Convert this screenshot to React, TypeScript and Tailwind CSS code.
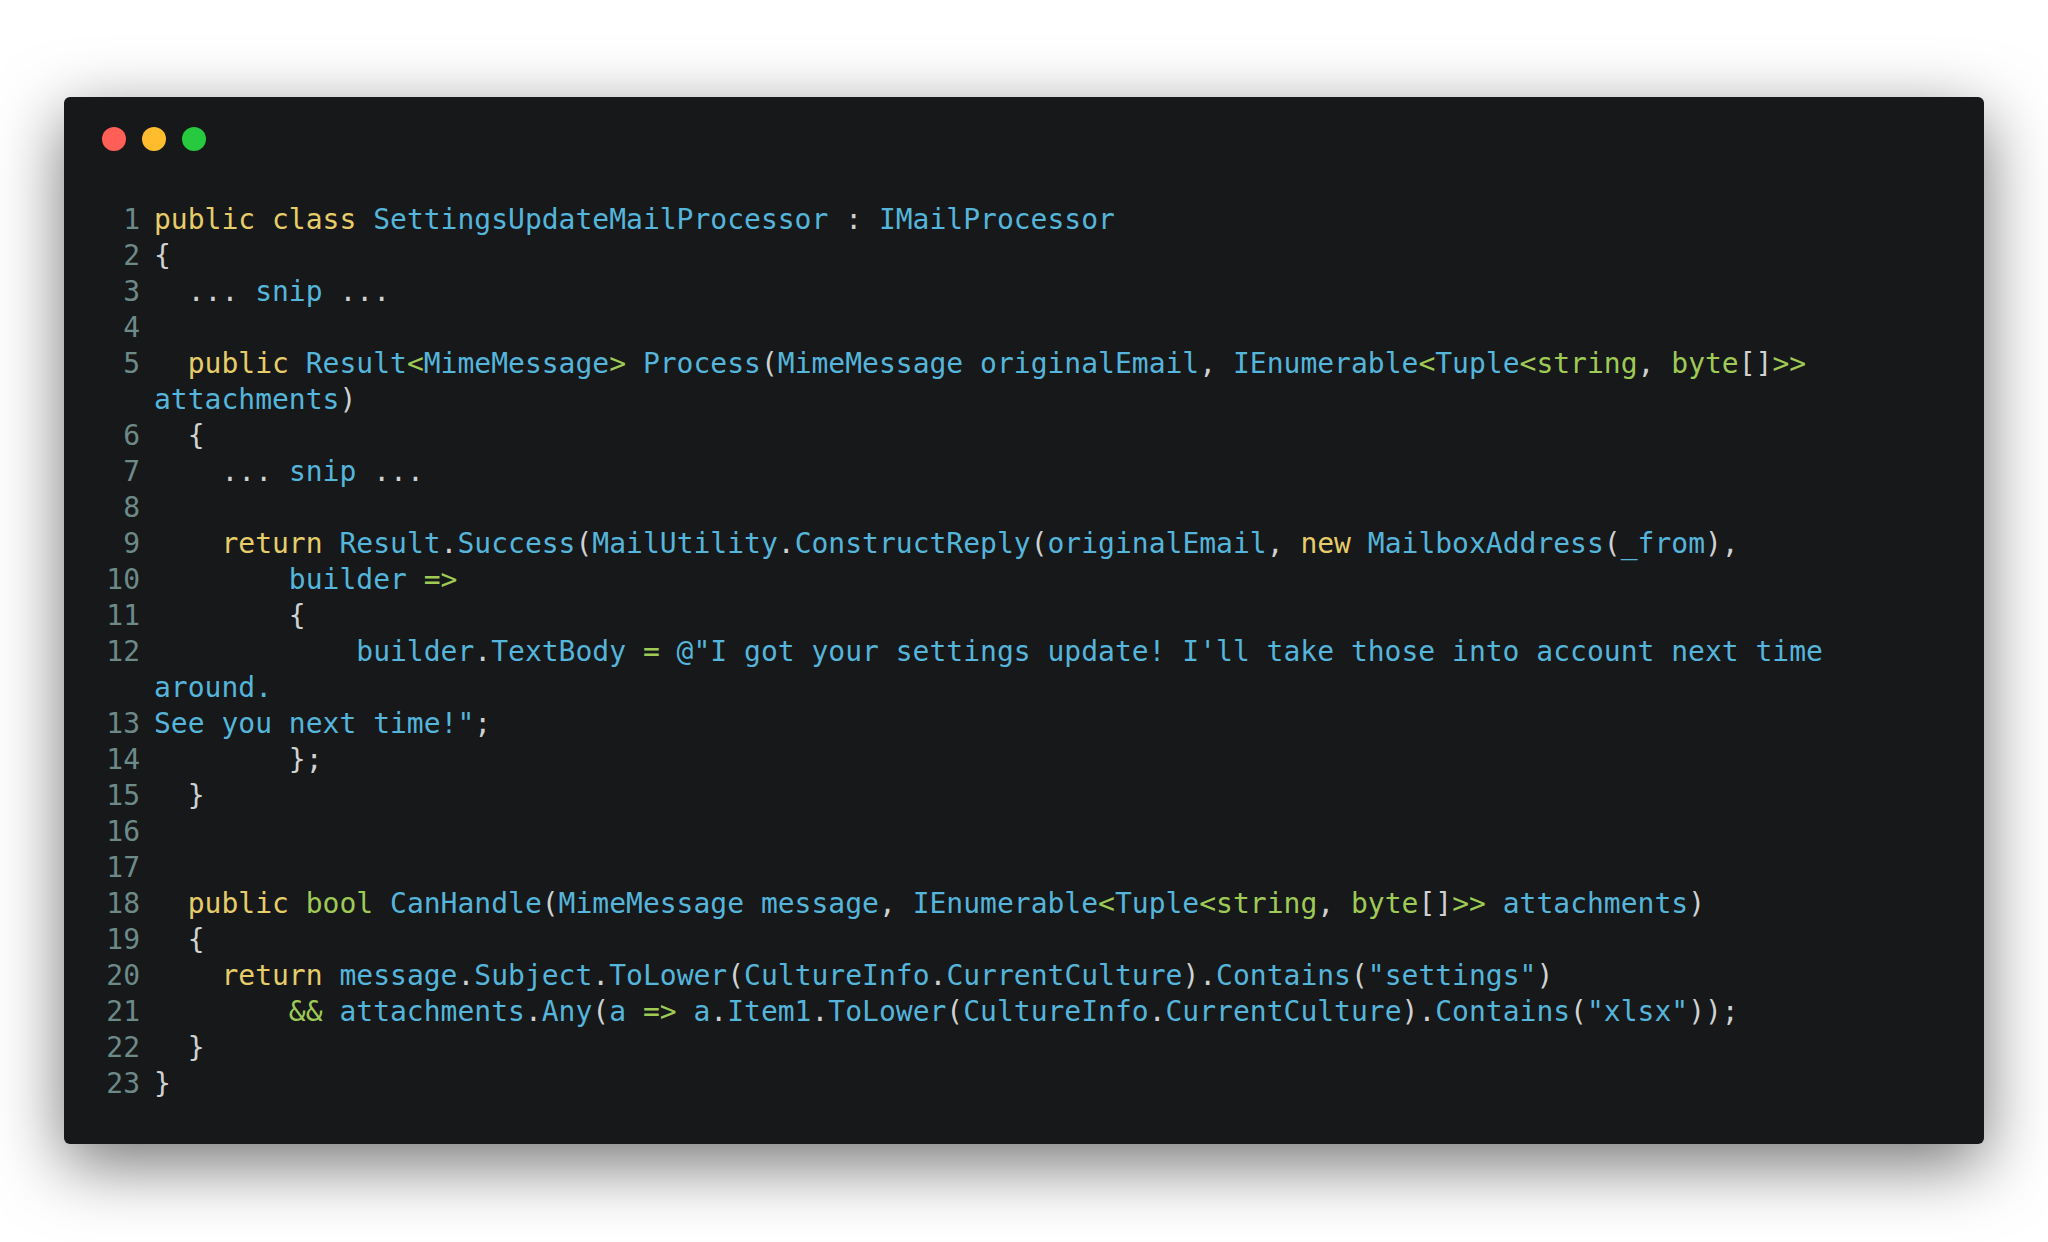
const source = `public class SettingsUpdateMailProcessor : IMailProcessor
{
  ... snip ...

  public Result<MimeMessage> Process(MimeMessage originalEmail, IEnumerable<Tuple<string, byte[]>> attachments)
  {
    ... snip ...

    return Result.Success(MailUtility.ConstructReply(originalEmail, new MailboxAddress(_from),
        builder =>
        {
            builder.TextBody = @"I got your settings update! I'll take those into account next time around.
See you next time!";
        };
  }


  public bool CanHandle(MimeMessage message, IEnumerable<Tuple<string, byte[]>> attachments)
  {
    return message.Subject.ToLower(CultureInfo.CurrentCulture).Contains("settings")
        && attachments.Any(a => a.Item1.ToLower(CultureInfo.CurrentCulture).Contains("xlsx"));
  }
}`;

type Token = { text: string; cls: string };

const tokenRe =
  /(@?"[^"]*")|\b(public|class|return|new)\b|\b(string|byte|bool)\b|(=>|&&|[<>=])|([A-Za-z_][A-Za-z0-9_]*)|([^A-Za-z_"@<>=&]+|.)/gs;

function tokenize(src: string): Token[][] {
  const lines: Token[][] = [[]];
  let m: RegExpExecArray | null;
  while ((m = tokenRe.exec(src))) {
    let cls = "text-[#cfd2d1]";
    if (m[1] || m[5]) cls = "text-[#55b5db]";
    else if (m[2]) cls = "text-[#e6cd69]";
    else if (m[3] || m[4]) cls = "text-[#9fca56]";
    const parts = m[0].split("\n");
    parts.forEach((p, i) => {
      if (i > 0) lines.push([]);
      if (p) lines[lines.length - 1].push({ text: p, cls });
    });
  }
  return lines;
}

const lines = tokenize(source);

export default function App() {
  return (
    <div className="bg-white px-[64px] pb-[98px] pt-[97px]">
      <div className="rounded-[6px] bg-[#16181a] pb-[42px] pl-[16px] pr-[90px] pt-[30px] shadow-[0_20px_68px_rgba(0,0,0,0.55)]">
        <div className="flex gap-[16px] pl-[22px]">
          <span className="h-[24px] w-[24px] rounded-full bg-[#ff5f56]" />
          <span className="h-[24px] w-[24px] rounded-full bg-[#ffbd2e]" />
          <span className="h-[24px] w-[24px] rounded-full bg-[#27c93f]" />
        </div>
        <div
          className="mt-[51px] text-[28px] leading-[36px]"
          style={{ fontFamily: '"DejaVu Sans Mono", "Liberation Mono", monospace' }}
        >
          {lines.map((tokens, i) => (
            <div key={i} className="flex">
              <div className="w-[60px] shrink-0 text-right text-[#6d8a88]">{i + 1}</div>
              <div className="min-w-0 flex-1 whitespace-pre-wrap break-words pl-[14px]">
                {tokens.map((t, j) => (
                  <span key={j} className={t.cls}>
                    {t.text}
                  </span>
                ))}
                {tokens.length === 0 && " "}
              </div>
            </div>
          ))}
        </div>
      </div>
    </div>
  );
}
